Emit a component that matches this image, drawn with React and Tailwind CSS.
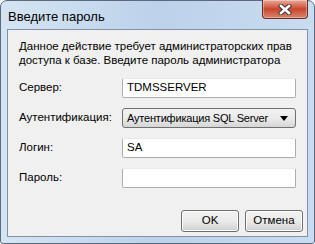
import React from "react";

const font = { fontFamily: '"Liberation Sans", Arial, sans-serif' };

const Field = ({ value }) => (
  <div className="h-[20px] w-[174px] bg-white border border-[#abadb3] border-t-[#e3e9ef] rounded-[2px] flex items-center px-[4px] text-[11.5px] text-black">
    {value}
  </div>
);

const Button = ({ children }) => (
  <button className="h-[22px] w-[58px] rounded-[3px] border border-[#707070] bg-gradient-to-b from-[#f2f2f2] via-[#ebebeb] to-[#cfcfcf] text-[11.5px] text-black shadow-[inset_0_0_0_1px_#fcfcfc]">
    {children}
  </button>
);

const App = () => {
  return (
    <div className="w-[315px] h-[244px] bg-white" style={font}>
      <div className="w-full h-full rounded-t-[7px] rounded-b-[3px] border border-[#5a6b80] bg-gradient-to-r from-[#d5e4f3] via-[#bcd2ea] to-[#c9dcf0] flex flex-col px-[6px] pb-[6px]">
        <div className="h-[28px] flex items-start justify-between">
          <div className="pt-[6px] pl-[1px] text-[13px] text-black">Введите пароль</div>
          <div className="h-[19px] w-[46px] mt-[-1px] rounded-b-[4px] border border-[#6b2b20] border-t-0 bg-gradient-to-b from-[#e9a99a] via-[#c8452c] to-[#d9826c] flex items-center justify-center shadow-[inset_0_0_0_1px_rgba(255,255,255,0.35)]">
            <svg width="16" height="11" viewBox="0 0 16 11">
              <path d="M4 2 L12 9 M12 2 L4 9" stroke="#3c3c3c" strokeWidth="4.5" strokeLinecap="square" />
              <path d="M4 2 L12 9 M12 2 L4 9" stroke="#ffffff" strokeWidth="2.6" strokeLinecap="square" />
            </svg>
          </div>
        </div>
        <div className="flex-1 border border-[#8192a8] bg-[#f0f0f0] flex flex-col text-[11.5px] text-black">
          <div className="pl-[11px] pt-[9px] leading-[14px] whitespace-nowrap">
            Данное действие требует администраторских прав
            <br />
            доступа к базе. Введите пароль администратора
          </div>
          <div className="mt-[11px] pl-[11px] grid grid-cols-[103px_174px] gap-y-[10px] items-center">
            <span>Сервер:</span>
            <Field value="TDMSSERVER" />
            <span>Аутентификация:</span>
            <div className="h-[20px] w-[174px] rounded-[3px] border border-[#707070] bg-gradient-to-b from-[#f2f2f2] via-[#ebebeb] to-[#d6d6d6] flex items-center justify-between pl-[4px] pr-[7px] whitespace-nowrap">
              <span className="text-[11px] tracking-[-0.2px]">Аутентификация SQL Server</span>
              <svg width="8" height="5" viewBox="0 0 8 5">
                <path d="M0 0 H8 L4 5 Z" fill="#000" />
              </svg>
            </div>
            <span>Логин:</span>
            <Field value="SA" />
            <span>Пароль:</span>
            <Field value="" />
          </div>
          <div className="mt-auto flex justify-end gap-[6px] pr-[4px] pb-[4px]">
            <Button>OK</Button>
            <Button>Отмена</Button>
          </div>
        </div>
      </div>
    </div>
  );
};

export default App;
